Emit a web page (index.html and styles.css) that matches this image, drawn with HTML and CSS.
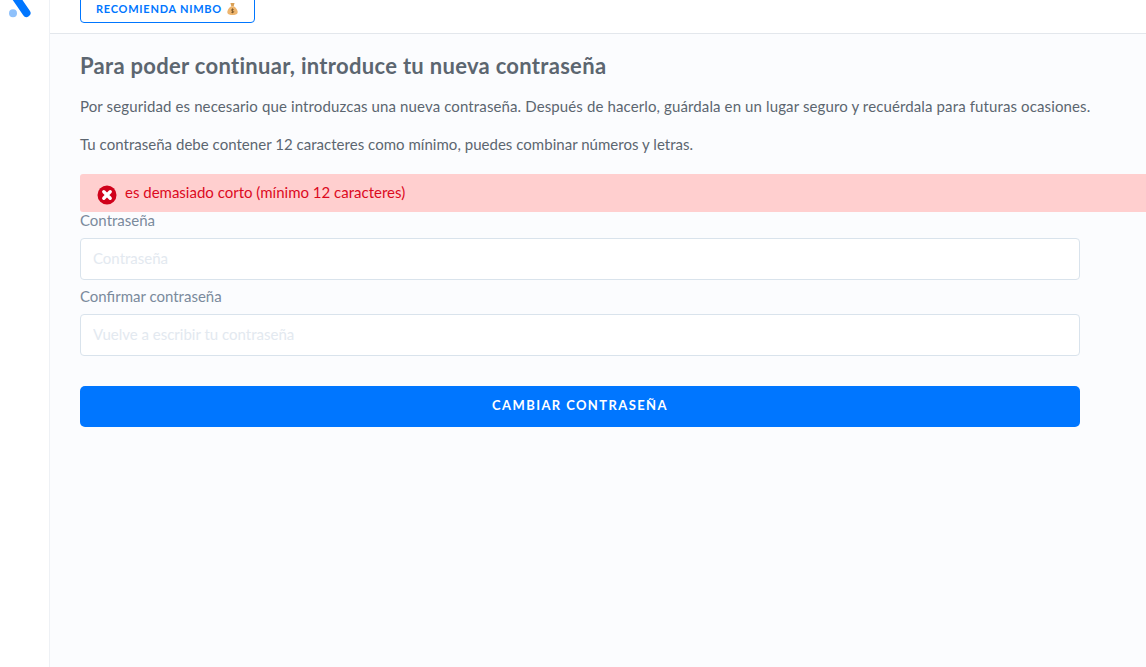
FILE: index.html
```html
<!DOCTYPE html>
<html lang="es">
<head>
	<meta charset="UTF-8">
	<meta name="viewport" content="width=device-width, initial-scale=1.0">
	<title>Cambiar contraseña</title>
	<link rel="stylesheet" href="styles.css">
</head>
<body>

<div class="app">
	<aside class="sidebar">
		<svg class="logo" width="32" height="20" viewBox="0 0 32 20">
			<path d="M15.5 -3 L20 3.5 L26.5 13" stroke="#0076ff" stroke-width="8" stroke-linecap="round" stroke-linejoin="round" fill="none"/>
			<circle cx="13" cy="13.3" r="4" fill="#8fc1fb"/>
		</svg>
	</aside>

	<main class="content">
		<header class="topbar">
			<a class="btn-outline" href="#">RECOMIENDA NIMBO
				<svg class="money" width="13" height="14" viewBox="0 0 14 14">
					<path d="M4.8 .5 L9.2 .5 L8.3 4 L5.7 4 Z" fill="#d9a055"/>
					<path d="M5.6 4 C2.5 6 1 9 1.5 11 C2 13 4.5 13.5 7 13.5 C9.5 13.5 12 13 12.5 11 C13 9 11.5 6 8.4 4 Z" fill="#eeb56e"/>
					<path d="M7 6.5 L7 11.5 M8.3 7.6 C7.4 7 5.8 7.2 5.8 8.2 C5.8 9.3 8.4 8.8 8.4 10 C8.4 11 6.6 11.1 5.6 10.4" stroke="#7a5528" stroke-width=".9" fill="none"/>
				</svg>
			</a>
		</header>

		<section class="page">
			<h1>Para poder continuar, introduce tu nueva contraseña</h1>
			<p class="intro">Por seguridad es necesario que introduzcas una nueva contraseña. Después de hacerlo, guárdala en un lugar seguro y recuérdala para futuras ocasiones.</p>
			<p class="rule">Tu contraseña debe contener 12 caracteres como mínimo, puedes combinar números y letras.</p>

			<div class="alert">
				<svg class="alert-icon" width="20" height="20" viewBox="0 0 20 20">
					<circle cx="10" cy="10" r="9.5" fill="#d0021b"/>
					<path d="M6.8 6.8 L13.2 13.2 M13.2 6.8 L6.8 13.2" stroke="#fff" stroke-width="3.4" stroke-linecap="round"/>
				</svg>
				<span class="alert-text">es demasiado corto (mínimo 12 caracteres)</span>
			</div>

			<form class="form">
				<label for="pass">Contraseña</label>
				<input id="pass" type="password" placeholder="Contraseña">
				<label for="pass2">Confirmar contraseña</label>
				<input id="pass2" type="password" placeholder="Vuelve a escribir tu contraseña">
				<button type="button" class="btn-primary">CAMBIAR CONTRASEÑA</button>
			</form>
		</section>
	</main>
</div>

</body>
</html>
```

FILE: styles.css
```css
html, body {
	margin: 0;
	height: 100%;
	overflow: hidden;}

body {
	background: #fff;
	color: #5c6670;
	font: normal 400 15px/20px 'Lato', sans-serif;}

.app {
	display: flex;
	height: 100%;}

.sidebar {
	flex: none;
	width: 49px;
	border-right: 1px solid #eef1f5;
	background: #fff;}

.logo {display: block;}

.content {
	flex: 1;
	min-width: 0;
	background: #fbfcfe;}

.topbar {
	display: flex;
	align-items: flex-end;
	box-sizing: border-box;
	height: 34px;
	padding: 0 0 10px 30px;
	overflow: hidden;
	background: #fff;
	border-bottom: 1px solid #e3e7ec;}

.btn-outline {
	flex: none;
	display: flex;
	align-items: center;
	justify-content: center;
	gap: 4px;
	box-sizing: border-box;
	width: 175px;
	height: 34px;
	padding-top: 6px;
	border: 1px solid #0076ff;
	border-radius: 4px;
	color: #0076ff;
	font-size: 11px;
	font-weight: 700;
	letter-spacing: .75px;
	text-decoration: none;}

.page {padding: 18px 0 0 30px;}

h1 {
	margin: 0 0 16px;
	color: #5c6670;
	font-size: 22px;
	line-height: 28px;
	font-weight: 700;
	letter-spacing: .3px;}

p {
	margin: 0 0 18px;
	line-height: 20px;}

.intro {letter-spacing: .12px;}
.rule {letter-spacing: .03px;}

.alert {
	display: flex;
	align-items: center;
	gap: 8px;
	box-sizing: border-box;
	height: 38px;
	margin-top: 20px;
	margin-right: -10px;
	padding-left: 17px;
	border-radius: 3px 0 0 3px;
	background: #ffcfcf;
	color: #dc0a1e;}

.alert-icon {flex: none; margin-top: 3px;}
.alert-text {padding-bottom: 2px;}

.form {
	display: flex;
	flex-direction: column;
	width: 1000px;}

label {
	height: 26px;
	color: #7a8a9c;
	line-height: 16px;}

input {
	box-sizing: border-box;
	height: 42px;
	margin-bottom: 8px;
	padding: 0 12px 2px;
	border: 1px solid #d9e3ec;
	border-radius: 4px;
	background: #fff;
	font: inherit;
	outline: none;}

input::placeholder {color: #e3e9f0; opacity: 1;}

.btn-primary {
	height: 41px;
	margin-top: 22px;
	padding-bottom: 5px;
	border: none;
	border-radius: 5px;
	background: #0076ff;
	color: #fff;
	font: inherit;
	font-size: 13px;
	font-weight: 700;
	letter-spacing: 1.4px;}
```
